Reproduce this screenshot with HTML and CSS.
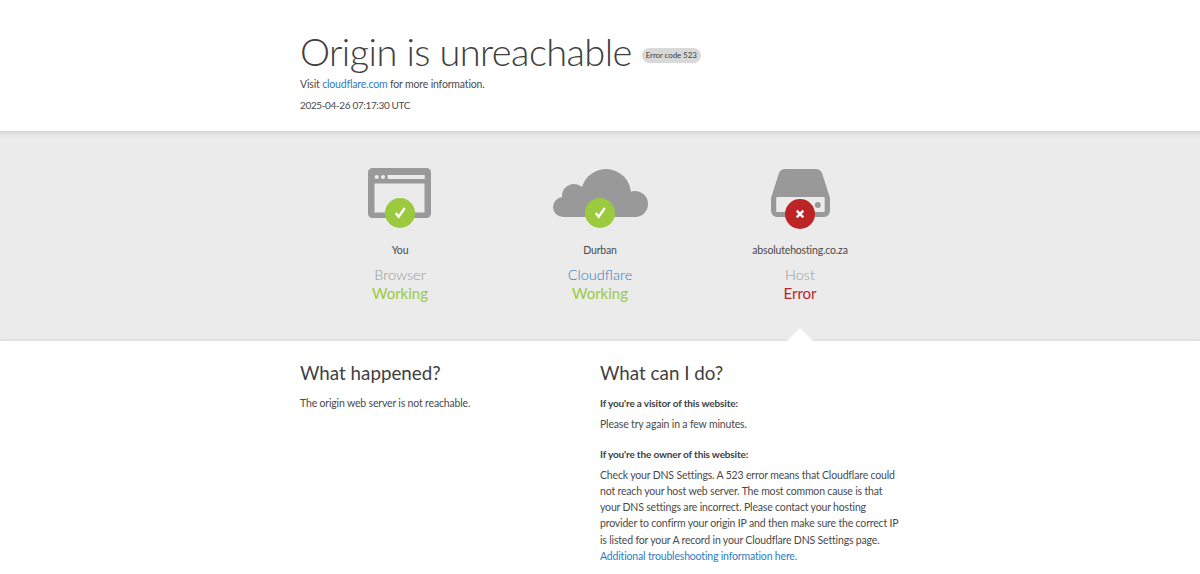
FILE: index.html
```html
<!DOCTYPE html>
<html lang="en">
<head>
<meta charset="utf-8">
<title>Origin is unreachable</title>
<link rel="stylesheet" href="styles.css">
</head>
<body>
<header class="top">
  <div class="wrap">
    <h1 class="title"><span>Origin is unreachable</span><span class="code">Error code 523</span></h1>
    <p class="line1">Visit <a href="#">cloudflare.com</a> for more information.</p>
    <p class="line2">2025-04-26 07:17:30 UTC</p>
  </div>
</header>
<section class="band">
  <div class="cols">
    <div class="col">
      <div class="icon">
        <svg class="art browser" width="63" height="50" viewBox="0 0 63 50"><rect width="63" height="50" rx="4.500" fill="#999"/><rect x="6.500" y="15.500" width="50" height="29" fill="#ebebeb"/><rect x="19.700" y="7" width="37" height="4" fill="#ebebeb"/><circle cx="8.700" cy="9" r="2.100" fill="#ebebeb"/><circle cx="15" cy="9" r="2.100" fill="#ebebeb"/></svg>
        <span class="badge ok"><svg width="30" height="30" viewBox="0 0 30 30"><path d="M10.700 15l3 3.700 6-8.700" fill="none" stroke="#fff" stroke-width="2.400"/></svg></span>
      </div>
      <div class="place">You</div>
      <div class="kind">Browser</div>
      <div class="status good">Working</div>
    </div>
    <div class="col">
      <div class="icon">
        <svg class="art cloud" width="95" height="48" viewBox="0 0 95 48"><g fill="#999"><circle cx="53" cy="25" r="25"/><circle cx="21" cy="27" r="12"/><circle cx="10" cy="38" r="10"/><circle cx="82" cy="35" r="13"/><rect x="10" y="26" width="72" height="22"/></g></svg>
        <span class="badge ok"><svg width="30" height="30" viewBox="0 0 30 30"><path d="M10.700 15l3 3.700 6-8.700" fill="none" stroke="#fff" stroke-width="2.400"/></svg></span>
      </div>
      <div class="place">Durban</div>
      <div class="kind link">Cloudflare</div>
      <div class="status good">Working</div>
    </div>
    <div class="col">
      <div class="icon">
        <svg class="art cloud" width="59" height="48" viewBox="0 0 59 48"><path fill="#999" d="M14 0h31c3 0 5.500 1.800 6.200 4.500L59 29v13a6 6 0 0 1-6 6H6a6 6 0 0 1-6-6V29L7.800 4.500C8.500 1.800 11 0 14 0z"/><rect x="5.200" y="28" width="48.500" height="15" rx="1" fill="#ebebeb"/><circle cx="46.800" cy="36" r="3" fill="#999"/></svg>
        <span class="badge bad"><svg width="30" height="30" viewBox="0 0 30 30"><path d="M11.700 11.700l6.600 6.600m0-6.600l-6.600 6.600" fill="none" stroke="#fff" stroke-width="2.400"/></svg></span>
      </div>
      <div class="place">absolutehosting.co.za</div>
      <div class="kind">Host</div>
      <div class="status err">Error</div>
      <span class="pointer"></span>
    </div>
  </div>
</section>
<main class="info">
  <div class="left">
    <h2>What happened?</h2>
    <p>The origin web server is not reachable.</p>
  </div>
  <div class="right">
    <h2>What can I do?</h2>
    <h3>If you're a visitor of this website:</h3>
    <p class="gap">Please try again in a few minutes.</p>
    <h3>If you're the owner of this website:</h3>
    <p>Check your DNS Settings. A 523 error means that Cloudflare could not reach your host web server. The most common cause is that your DNS settings are incorrect. Please contact your hosting provider to confirm your origin IP and then make sure the correct IP is listed for your A record in your Cloudflare DNS Settings page. <a href="#">Additional troubleshooting information here.</a></p>
  </div>
</main>
</body>
</html>
```
FILE: styles.css
```css
* { box-sizing: border-box; }
html, body { margin: 0; padding: 0; height: 574px; overflow: hidden; }
body { background: #fff; color: #4a4a4a; font-family: "Lato", "Open Sans", sans-serif; font-size: 10.500px; letter-spacing: -.17px; line-height: 16.200px; }
a { color: #2f7bbf; text-decoration: none; }
p, h1, h2, h3 { margin: 0; }
.top { height: 131px; padding-top: 28px; }
.wrap { width: 600px; margin: 0 auto; }
.title { display: flex; align-items: center; gap: 10px; font-size: 38px; letter-spacing: -.6px; font-weight: 300; line-height: 46px; color: #404040; }
.code { background: #d9d9d9; border-radius: 8px; padding: 0 4px; font-size: 8px; letter-spacing: -.1px; font-weight: 400; line-height: 15px; margin-top: 8px; }
.line1 { margin-top: 2px; }
.line2 { margin-top: 5px; font-size: 10px; letter-spacing: -.36px; }
.band { position: relative; height: 210px; background: #ebebeb; box-shadow: inset 0 6px 6px -6px rgba(0,0,0,.2), inset 0 -3px 3px -2px rgba(0,0,0,.07); padding-top: 37px; }
.cols { width: 600px; margin: 0 auto; display: grid; grid-template-columns: repeat(3, 200px); }
.col { position: relative; text-align: center; display: flex; flex-direction: column; align-items: center; }
.icon { position: relative; height: 60px; display: flex; align-items: flex-start; justify-content: center; margin-bottom: 14px; }
.art { display: block; }
.browser { margin-right: 1px; }
.cloud { margin-top: 1px; }
.badge { position: absolute; left: 50%; top: 30px; margin-left: -15px; width: 30px; height: 30px; border-radius: 50%; }
.badge svg { display: block; }
.bad { top: 31px; }
.ok { background: #9bca3e; }
.bad { background: #bd2426; }
.place { line-height: 16px; }
.kind { font-size: 14.500px; letter-spacing: 0; line-height: 19px; color: #999; margin-top: 7px; font-weight: 300; }
.link { color: #2f7bbf; }
.status { font-size: 15px; letter-spacing: 0; line-height: 20px; margin-top: -1px; }
.good { color: #9bca3e; }
.err { color: #bd2426; }
.pointer { position: absolute; left: 50%; top: 160px; margin-left: -13px; width: 0; height: 0; border-left: 13px solid transparent; border-right: 13px solid transparent; border-bottom: 13px solid #fff; }
.info { width: 600px; margin: 0 auto; padding-top: 19px; display: grid; grid-template-columns: 300px 300px; }
h2 { font-size: 18.800px; letter-spacing: 0; font-weight: 400; line-height: 26px; margin-bottom: 9px; color: #404040; }
h3 { font-size: 10px; letter-spacing: -.15px; font-weight: 700; line-height: 16px; margin-bottom: 4.500px; color: #404040; }
.gap { margin-bottom: 14.500px; }
```
